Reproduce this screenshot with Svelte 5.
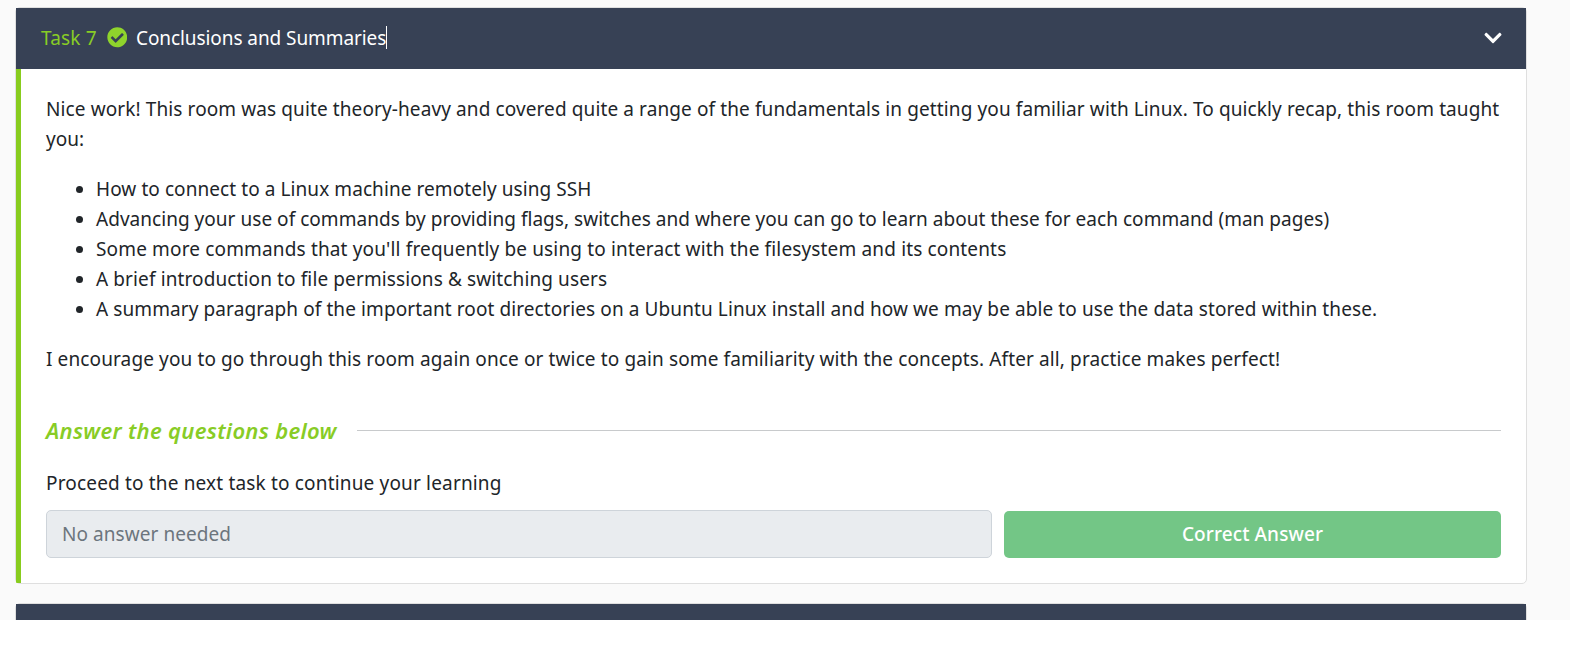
<script>
  const topics = [
    { text: 'How to connect to a Linux machine remotely using SSH', ls: 0.077 },
    { text: 'Advancing your use of commands by providing flags, switches and where you can go to learn about these for each command (man pages)', ls: 0.033 },
    { text: "Some more commands that you'll frequently be using to interact with the filesystem and its contents", ls: 0.152 },
    { text: 'A brief introduction to file permissions & switching users', ls: 0.115 },
    { text: 'A summary paragraph of the important root directories on a Ubuntu Linux install and how we may be able to use the data stored within these.', ls: 0.095 }
  ];
</script>

<main>
  <section class="card">
    <header>
      <span class="num">Task 7</span>
      <svg class="check" viewBox="0 0 512 512"><path fill="currentColor" d="M504 256c0 136.967-111.033 248-248 248S8 392.967 8 256 119.033 8 256 8s248 111.033 248 248zM227.314 387.314l184-184c6.248-6.248 6.248-16.379 0-22.627l-22.627-22.627c-6.248-6.249-16.379-6.249-22.628 0L216 308.118l-70.059-70.059c-6.248-6.248-16.379-6.248-22.628 0l-22.627 22.627c-6.248 6.248-6.248 16.379 0 22.627l104 104c6.249 6.249 16.379 6.249 22.628.001z"/></svg>
      <span class="title">Conclusions and Summaries</span><i class="caret"></i>
      <svg class="chevron" viewBox="0 0 448 512"><path fill="currentColor" d="M207.029 381.476L12.686 187.132c-9.373-9.373-9.373-24.569 0-33.941l22.667-22.667c9.357-9.357 24.522-9.375 33.901-.04L224 284.505l154.745-154.021c9.379-9.335 24.544-9.317 33.901.04l22.667 22.667c9.373 9.373 9.373 24.569 0 33.941L240.971 381.476c-9.373 9.372-24.569 9.372-33.942 0z"/></svg>
    </header>
    <div class="body">
      <p><span class="intro">Nice work! This room was quite theory-heavy and covered quite a range of the fundamentals in getting you familiar with Linux. To quickly recap, this room taught</span><br />you:</p>
      <ul>
        {#each topics as t}
          <li><span style="letter-spacing: {t.ls}px">{t.text}</span></li>
        {/each}
      </ul>
      <p><span class="outro">I encourage you to go through this room again once or twice to gain some familiarity with the concepts. After all, practice makes perfect!</span></p>
      <div class="divider"><h2>Answer the questions below</h2><hr /></div>
      <p class="question">Proceed to the next task to continue your learning</p>
      <div class="answer">
        <div class="field">No answer needed</div>
        <button>Correct Answer</button>
      </div>
    </div>
  </section>
  <section class="card next"><header></header></section>
</main>

<style>
  :global(body) { background: #fff; }
  main { box-sizing: border-box; height: 620px; overflow: hidden; padding: 7px 43px 0 15px; background: #fafafa; color: #212529; font: 19px/30px "Noto Sans", "Open Sans", sans-serif; }
  .card { border: 1px solid #dfdfdf; border-radius: 5px; background: #fff; margin-bottom: 19px; }
  header { display: flex; align-items: center; height: 61px; box-sizing: border-box; padding: 0 24px 2px 25px; background: #374155; color: #fff; white-space: nowrap; }
  .num { width: 65.5px; color: #88cc26; letter-spacing: 0.15px; }
  .check { width: 20.5px; height: 20.5px; margin-right: 9px; color: #8fd42c; }
  .title { letter-spacing: -0.08px; }
  .caret { width: 1px; height: 23px; background: #fff; }
  .chevron { width: 18px; height: 20px; margin-left: auto; }
  .body { height: 514px; box-sizing: border-box; border-left: 5px solid #88cc1e; border-bottom-left-radius: 1px; padding: 25px 25px 0 25px; white-space: nowrap; }
  .intro { letter-spacing: 0.107px; }
  .outro { letter-spacing: 0.118px; }
  p { margin: 0 0 20px; }
  ul { margin: 0 0 20px; padding-left: 50px; }
  .divider { display: flex; align-items: center; height: 30px; margin: 41px 0 23px; }
  h2 { margin: 0; width: 311px; color: #88cc26; font-size: 22px; font-style: italic; font-weight: 600; letter-spacing: 0.3px; }
  hr { flex: 1; height: 1px; margin: 0; border: 0; background: #c8cacc; }
  .question { margin-bottom: 12px; letter-spacing: 0.167px; }
  .answer { display: flex; align-items: flex-end; gap: 12px; }
  .field { box-sizing: border-box; width: 946px; height: 48px; padding: 8px 15px; border: 1px solid #ced4da; border-radius: 5px; background: #e9ecef; color: #6c757d; letter-spacing: 0.06px; }
  button { flex: 1; height: 47px; padding: 0 0 2px; border: 0; border-radius: 5px; background: #73c686; color: #fff; font: inherit; font-weight: 500; letter-spacing: 0.1px; }
</style>
